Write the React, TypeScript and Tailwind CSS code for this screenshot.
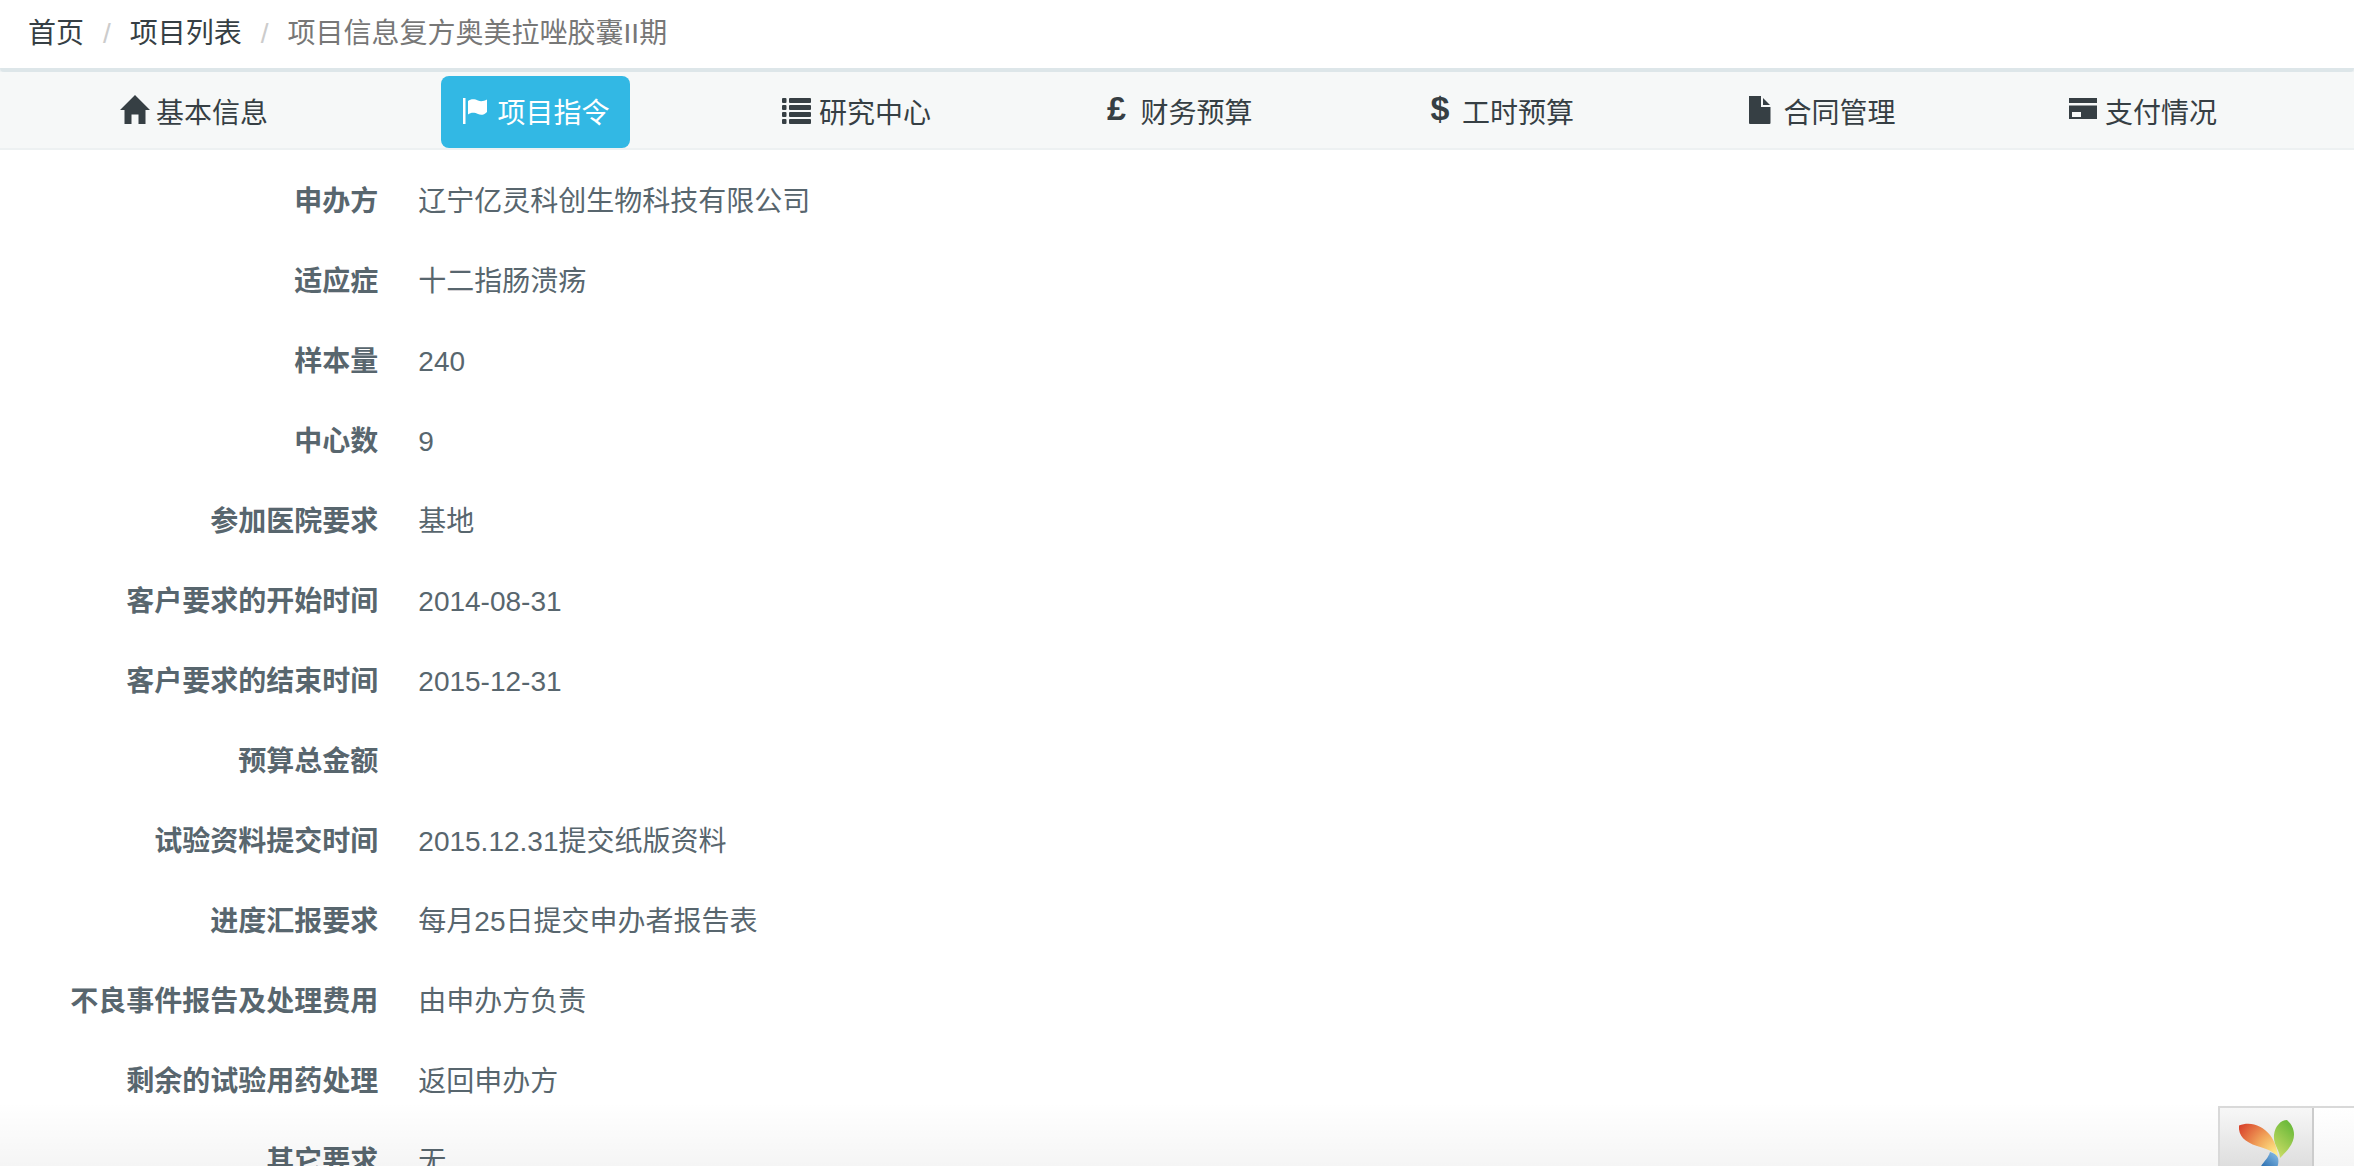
import React from 'react';

const tabs = [
  { id: 'home', label: '基本信息' },
  { id: 'flag', label: '项目指令' },
  { id: 'list', label: '研究中心' },
  { id: 'gbp', label: '财务预算' },
  { id: 'usd', label: '工时预算' },
  { id: 'file', label: '合同管理' },
  { id: 'card', label: '支付情况' },
];

const rows = [
  { label: '申办方', value: '辽宁亿灵科创生物科技有限公司' },
  { label: '适应症', value: '十二指肠溃疡' },
  { label: '样本量', value: '240' },
  { label: '中心数', value: '9' },
  { label: '参加医院要求', value: '基地' },
  { label: '客户要求的开始时间', value: '2014-08-31' },
  { label: '客户要求的结束时间', value: '2015-12-31' },
  { label: '预算总金额', value: '' },
  { label: '试验资料提交时间', value: '2015.12.31提交纸版资料' },
  { label: '进度汇报要求', value: '每月25日提交申办者报告表' },
  { label: '不良事件报告及处理费用', value: '由申办方负责' },
  { label: '剩余的试验用药处理', value: '返回申办方' },
  { label: '其它要求', value: '无' },
];

const TabIcon: React.FC<{ id: string }> = ({ id }) => {
  if (id === 'gbp' || id === 'usd') {
    return (
      <span
        aria-hidden="true"
        className={`w-7 text-center text-[34px] leading-7 font-bold ${id === 'gbp' ? 'pr-1' : ''}`}
      >
        {id === 'gbp' ? '£' : '$'}
      </span>
    );
  }
  return (
    <svg viewBox="0 0 28 28" className="mt-0.5 w-7 h-7 shrink-0 overflow-visible" fill="currentColor" aria-hidden="true">
      {id === 'home' && <path d="M15 -1L30 14H25.500V28H18.500V18.500H11.500V28H4.500V14H0Z" />}
      {id === 'flag' && (
        <>
          <rect x="2" y="2" width="2.500" height="26" />
          <path d="M7 5C10 2.500 14 3 17 4.500C20 6 23 5 26 3.500V16C23 19 20 19.500 17 18C14 16.500 10 16 7 18.500Z" />
        </>
      )}
      {id === 'list' &&
        [2, 9, 16, 23].map((y) => (
          <g key={y}>
            <rect x="-1" y={y} width="4.500" height="5" rx="1" />
            <rect x="6" y={y} width="22" height="5" rx="1" />
          </g>
        ))}
      {id === 'file' && (
        <>
          <path d="M2 0H14V11H23.500V27Q23.500 28 22.500 28H3Q2 28 2 27Z" />
          <path d="M16 2L23 9H16Z" />
        </>
      )}
      {id === 'card' && (
        <>
          <path d="M0 2H28V7H0Z" />
          <path fillRule="evenodd" d="M0 9.500H28V23H0ZM3 16V21H12V16Z" />
        </>
      )}
    </svg>
  );
};

const DebugToolbar: React.FC = () => (
  <div className="absolute right-0 bottom-0 flex h-[60px] w-[136px] overflow-hidden border-t-2 border-l-2 border-[#d9d9d9] bg-linear-to-b from-white to-[#f5f5f5]">
    <a href="#debug" aria-label="Debug" className="w-[94px] shrink-0 border-r-2 border-[#ccc] bg-linear-to-b from-[#f7f7f7] to-[#dedede]">
      <svg viewBox="0 0 92 58" className="h-[58px] w-[92px]" aria-hidden="true">
        <defs>
          <radialGradient id="leafRed" gradientUnits="userSpaceOnUse" cx="57" cy="46" r="46">
            <stop offset="0" stopColor="#fff08c" />
            <stop offset="0.450" stopColor="#f2a85c" />
            <stop offset="1" stopColor="#d9432c" />
          </radialGradient>
          <linearGradient id="leafGreen" x1="0" y1="1" x2="0.500" y2="0">
            <stop offset="0" stopColor="#d6e06a" />
            <stop offset="1" stopColor="#6fbb3c" />
          </linearGradient>
          <linearGradient id="leafBlue" x1="1" y1="0" x2="0" y2="1">
            <stop offset="0" stopColor="#8fc1e8" />
            <stop offset="1" stopColor="#1f66ab" />
          </linearGradient>
        </defs>
        <path d="M19 17.500C30 13 42 17 50 27C55 34 57 40 58 49C52 42 46 41 37 38C25 34 18 28 19 17.500Z" fill="url(#leafRed)" />
        <path d="M54 27C55 18 61 12 67 12C76 20 76 31 69 40C66 44 63 47 60 50C60 42 53 37 54 27Z" fill="url(#leafGreen)" />
        <path d="M50 44C54 45 57 47 58 50C59 54 58 57 57 60H40C43 54 48 51 50 44Z" fill="url(#leafBlue)" />
      </svg>
    </a>
  </div>
);

const App: React.FC = () => {
  return (
    <div className="relative h-screen overflow-hidden bg-white font-['Liberation_Sans','Noto_Sans_CJK_SC',sans-serif] text-[28px] leading-10 text-[#58666e]">
      <nav aria-label="breadcrumb" className="bg-[#edf1f2]">
        <ol className="flex gap-[19px] rounded-b border-b-4 border-[#dde6e9] bg-white px-7 py-3.5 text-[#363f44]">
          <li><a href="#home">首页</a></li>
          <li aria-hidden="true" className="text-[#ccc]">/</li>
          <li><a href="#projects">项目列表</a></li>
          <li aria-hidden="true" className="text-[#ccc]">/</li>
          <li className="text-[#777]">项目信息复方奥美拉唑胶囊II期</li>
        </ol>
      </nav>

      <nav className="flex justify-between border-b-2 border-[#edf1f2] bg-[#f6f8f8] pt-1 pr-[117px] pl-[100px] text-[#363f44]">
        {tabs.map((tab) => (
          <a
            key={tab.id}
            href={`#${tab.id}`}
            className={`flex items-start gap-2 rounded-lg px-5 pt-[18px] pb-3.5 first:mr-5 ${
              tab.id === 'flag' ? 'bg-[#32b8e4] text-white' : ''
            }`}
          >
            <TabIcon id={tab.id} />
            <span>{tab.label}</span>
          </a>
        ))}
      </nav>

      <dl className="pt-8">
        {rows.map((row) => (
          <div key={row.label} className="mb-10 flex">
            <dt className="w-1/6 shrink-0 pr-3.5 text-right font-bold">{row.label}</dt>
            <dd className="pl-[26px]">{row.value}</dd>
          </div>
        ))}
      </dl>

      <div className="pointer-events-none absolute inset-x-0 bottom-0 h-16 bg-linear-to-b from-transparent to-black/4" />
      <DebugToolbar />
    </div>
  );
};

export default App;
